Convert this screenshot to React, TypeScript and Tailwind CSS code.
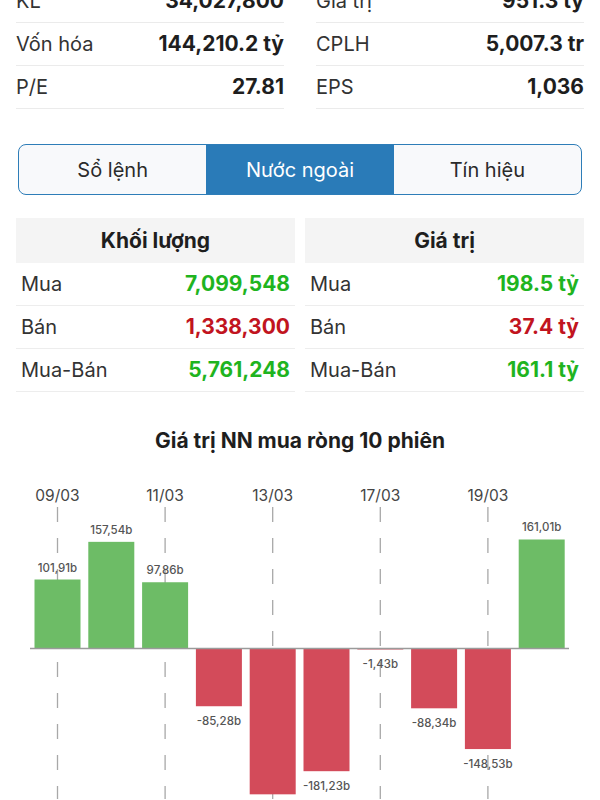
import React from 'react';

const stats: { label: string; value: string }[][] = [
  [
    { label: 'KL', value: '34,027,800' },
    { label: 'Vốn hóa', value: '144,210.2 tỷ' },
    { label: 'P/E', value: '27.81' },
  ],
  [
    { label: 'Giá trị', value: '951.3 tỷ' },
    { label: 'CPLH', value: '5,007.3 tr' },
    { label: 'EPS', value: '1,036' },
  ],
];

const tabs = ['Sổ lệnh', 'Nước ngoài', 'Tín hiệu'];

type Row = { label: string; value: string; up: boolean };

const foreign: { title: string; rows: Row[] }[] = [
  {
    title: 'Khối lượng',
    rows: [
      { label: 'Mua', value: '7,099,548', up: true },
      { label: 'Bán', value: '1,338,300', up: false },
      { label: 'Mua-Bán', value: '5,761,248', up: true },
    ],
  },
  {
    title: 'Giá trị',
    rows: [
      { label: 'Mua', value: '198.5 tỷ', up: true },
      { label: 'Bán', value: '37.4 tỷ', up: false },
      { label: 'Mua-Bán', value: '161.1 tỷ', up: true },
    ],
  },
];

const sessions = [
  { date: '09/03', value: 101.91 },
  { date: '10/03', value: 157.54 },
  { date: '11/03', value: 97.86 },
  { date: '12/03', value: -85.28 },
  { date: '13/03', value: -215.4 },
  { date: '16/03', value: -181.23 },
  { date: '17/03', value: -1.43 },
  { date: '18/03', value: -88.34 },
  { date: '19/03', value: -148.53 },
  { date: '20/03', value: 161.01 },
];

const fmt = (v: number) => v.toFixed(2).replace('.', ',') + 'b';

function NetChart() {
  const base = 169.5; // zero line inside the svg
  const scale = 0.677;
  const barW = 46;
  const cx = (i: number) => 57.5 + i * 53.8;

  return (
    <svg width="600" height="320" viewBox="0 0 600 320" className="block" style={{ fontFamily: 'Inter, sans-serif' }}>
      {sessions.map((s, i) =>
        i % 2 === 0 ? (
          <g key={'d' + i}>
            <text x={cx(i)} y={22} textAnchor="middle" fontSize="15.5" fill="#454545">
              {s.date}
            </text>
            <line x1={cx(i)} x2={cx(i)} y1={28} y2={320} stroke="#a8a8a8" strokeWidth="1.3" strokeDasharray="15 16" />
          </g>
        ) : null
      )}

      {sessions.map((s, i) => {
        const h = Math.max(Math.abs(s.value) * scale, 1);
        const y = s.value >= 0 ? base - h : base;
        return (
          <rect key={'b' + i} x={cx(i) - barW / 2} y={y} width={barW} height={h} fill={s.value >= 0 ? '#6dbc66' : '#d34b5a'} />
        );
      })}

      <line x1="30" x2="569" y1={base} y2={base} stroke="#9a9a9a" strokeWidth="1.5" />

      {sessions.map((s, i) => {
        const h = Math.abs(s.value) * scale;
        const y = s.value >= 0 ? base - h - 8 : base + h + 19;
        if (i === 4) return null;
        return (
          <text key={'l' + i} x={cx(i)} y={y} textAnchor="middle" fontSize="11.5" fontWeight="500" fill="#555">
            {fmt(s.value)}
          </text>
        );
      })}
    </svg>
  );
}

export default function App() {
  return (
    <div className="w-[600px] h-[800px] overflow-hidden bg-white text-[#222]" style={{ fontFamily: 'Inter, "Noto Sans", sans-serif' }}>
      {/* quote stats */}
      <div className="-mt-[20px] px-4 grid grid-cols-2 gap-8">
        {stats.map((col, ci) => (
          <div key={ci}>
            {col.map((r) => (
              <div key={r.label} className="h-[43px] flex items-center justify-between border-b border-[#ebebeb]">
                <span className="text-[20px] text-[#333]">{r.label}</span>
                <span className="text-[21px] font-bold text-[#1e1e1e]">{r.value}</span>
              </div>
            ))}
          </div>
        ))}
      </div>

      {/* segmented tabs */}
      <div className="mt-[35px] mx-[18px] h-[51px] grid grid-cols-3 rounded-[8px] border-[1.5px] border-[#2e7db8] overflow-hidden bg-[#f8f9fb]">
        {tabs.map((t, i) => (
          <div
            key={t}
            className={`flex items-center justify-center text-[20px] ${
              i === 1 ? 'bg-[#2a7bb8] text-white' : 'text-[#2b2b2b]'
            }`}
          >
            {t}
          </div>
        ))}
      </div>

      {/* foreign trading */}
      <div className="mt-[23px] px-4 grid grid-cols-2 gap-[10px]">
        {foreign.map((tbl) => (
          <div key={tbl.title}>
            <div className="h-[45px] bg-[#f4f4f4] flex items-center justify-center text-[21px] font-bold text-[#1e1e1e]">
              {tbl.title}
            </div>
            {tbl.rows.map((r) => (
              <div key={r.label} className="h-[43px] px-[5px] flex items-center justify-between border-b border-[#ededed]">
                <span className="text-[20px] text-[#333]">{r.label}</span>
                <span className={`text-[21px] font-bold ${r.up ? 'text-[#1fb41f]' : 'text-[#c11420]'}`}>{r.value}</span>
              </div>
            ))}
          </div>
        ))}
      </div>

      {/* chart */}
      <div className="mt-[37px] text-center text-[21px] leading-[24px] font-bold text-[#1e1e1e]">
        Giá trị NN mua ròng 10 phiên
      </div>
      <div className="mt-[26px]">
        <NetChart />
      </div>
    </div>
  );
}
